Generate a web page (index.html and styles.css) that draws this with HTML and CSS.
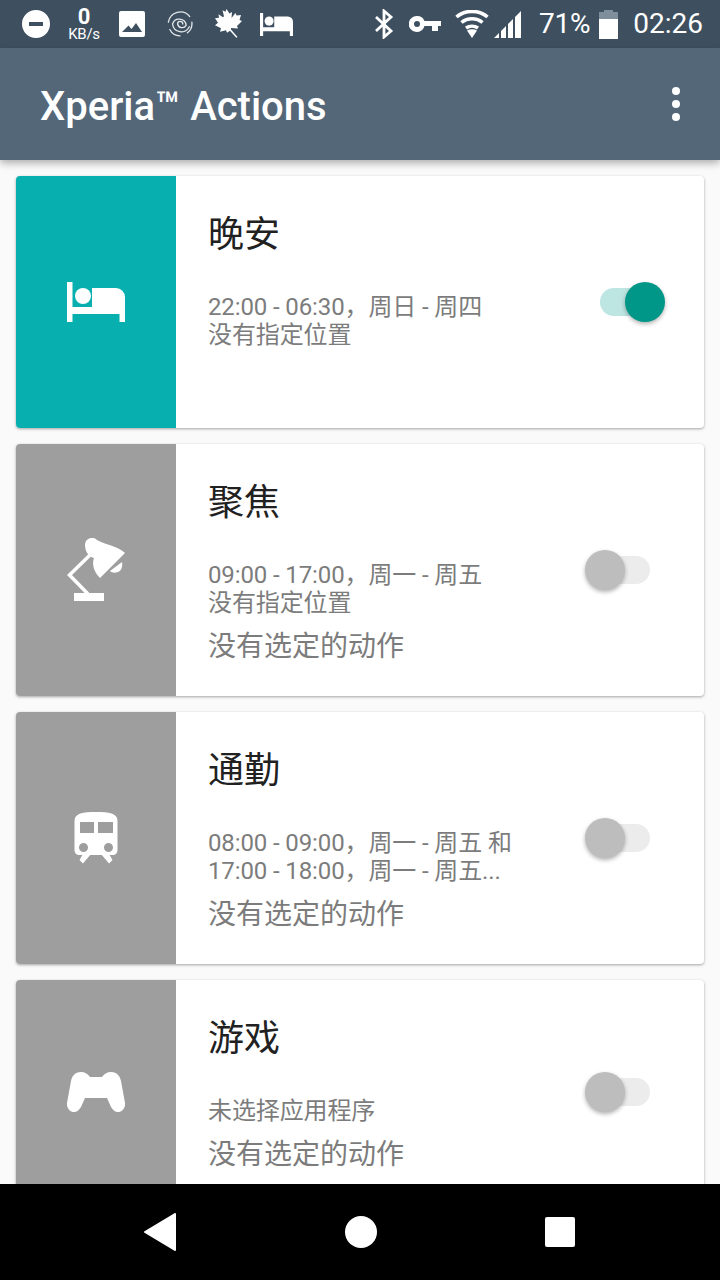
FILE: index.html
```html
<!DOCTYPE html>
<html lang="zh">
<head>
<meta charset="utf-8">
<title>Xperia Actions</title>
<link rel="stylesheet" href="styles.css">
</head>
<body>
<div class="screen">
  <header class="status">
    <div class="status-left">
      <svg class="si dnd" viewBox="0 0 28 28"><path fill="#fff" fill-rule="evenodd" d="M14 0a14 14 0 1 1 0 28a14 14 0 1 1 0-28zM7 12v4h14v-4z"/></svg>
      <div class="speed"><span class="speed-num">0</span><span class="speed-unit">KB/s</span></div>
      <svg class="si pic" viewBox="0 0 26 26"><path fill="#fff" fill-rule="evenodd" d="M2 0h22a2 2 0 0 1 2 2v22a2 2 0 0 1-2 2H2a2 2 0 0 1-2-2V2a2 2 0 0 1 2-2zM3 21h20l-6-9l-4.500 6l-3-3.500z"/></svg>
      <svg class="si swirl" viewBox="0 0 28 28" fill="none" stroke="#e4e8eb" stroke-width="1.400" stroke-linecap="round"><path d="M17 14A2.800 2.800 0 0 0 11.400 14A5 5 0 0 0 20.600 15.500A7.500 7.500 0 0 0 6 14A9.500 9.500 0 0 0 24 17"/><path d="M24.500 6A13 13 0 0 0 1.500 12"/><path d="M3 20A12.500 12.500 0 0 0 14 26.800"/><path d="M26.800 12A13 13 0 0 1 22 23.500"/></svg>
      <svg class="si leaf" viewBox="0 0 30 30"><path fill="#fff" d="M13.500 0l3 4.500l2.500-1.500l-.5 6l4-5l1 2.500l4.500-.5l-1.500 5l2.500 1l-5 5l1 2.500l-7-.5v1.500l6.500 7.500l-1.200.8l-6.300-7l-3 2l-1-2.500l-6 1.500l1-3.500l-6-3l3-2.500l-3-4.500l4-.5l-.5-3.500l4.500 3l1-1l-1.500-6l3 1.500z"/></svg>
      <svg class="si bed-s" viewBox="0 0 58 40"><path fill="#fff" d="M0 0h5.500v25H25V6h24a9 9 0 0 1 9 9v25h-5.500v-8H5.500v8H0z"/><circle fill="#fff" cx="16" cy="14" r="8"/></svg>
    </div>
    <div class="status-right">
      <svg class="si bt" viewBox="0 0 20 30" fill="none" stroke="#fff" stroke-width="2.800"><path d="M2 8l15 14l-7 6V2l7 6L2 22"/></svg>
      <svg class="si key" viewBox="0 0 32 18"><path fill="#fff" fill-rule="evenodd" d="M8 1a8 8 0 0 1 7.500 5H32v5h-3v5h-6v-5h-7.500A8 8 0 1 1 8 1zM8 6a3 3 0 1 0 0 6a3 3 0 0 0 0-6z"/></svg>
      <svg class="si wifi" viewBox="0 0 34 28" fill="none" stroke="#fff" stroke-width="3.500"><path d="M1.500 7c8.500-7.500 22.500-7.500 31 0"/><path d="M6.500 12.500c6-5 15-5 21 0"/><path d="M11 18c3.500-2.500 8.500-2.500 12 0"/><path fill="#fff" stroke="none" d="M12 20.500c3-1.800 7-1.800 10 0L17 28z"/></svg>
      <svg class="si signal" viewBox="0 0 28 28"><path fill="#fff" d="M0 28L5 23V28zM7 28V21L12 16V28zM14 28V14L19 9V28zM21 28V7L27 1V28z"/></svg>
      <span class="pct">71%</span>
      <div class="batt"><span class="batt-cap"></span><span class="batt-body"></span></div>
      <span class="time">02:26</span>
    </div>
  </header>

  <div class="appbar">
    <h1 class="app-title">Xperia™ Actions</h1>
    <div class="more"><i></i><i></i><i></i></div>
  </div>

  <main class="list">
    <article class="card">
      <div class="thumb thumb-on">
        <svg class="ico ico-bed" viewBox="0 0 58 40"><path fill="#fff" d="M0 0h5.500v25H25V6h24a9 9 0 0 1 9 9v25h-5.500v-8H5.500v8H0z"/><circle fill="#fff" cx="16" cy="14" r="8"/></svg>
      </div>
      <div class="body">
        <h2 class="name">晚安</h2>
        <p class="meta">22:00 - 06:30，周日 - 周四<br>没有指定位置</p>
      </div>
      <div class="switch switch-on"><span class="track"></span><span class="knob"></span></div>
    </article>

    <article class="card">
      <div class="thumb">
        <svg class="ico ico-lamp" viewBox="26 13 60 64"><path fill="none" stroke="#fff" stroke-width="3.500" d="M50 30L29.500 50L48 69"/><path fill="#fff" d="M34 68h30v8H34z"/><path fill="#fff" d="M45 20a7 7 0 0 1 12-5C66 20 78 21 85 28L60 53C53 46 52 38 54 33C50 32 45 28 45 20z"/><path fill="#fff" d="M70 46L82 37c1 5-1 9-4 10c-3 1-6 1-8-1z"/></svg>
      </div>
      <div class="body">
        <h2 class="name">聚焦</h2>
        <p class="meta">09:00 - 17:00，周一 - 周五<br>没有指定位置</p>
        <p class="action">没有选定的动作</p>
      </div>
      <div class="switch"><span class="track"></span><span class="knob"></span></div>
    </article>

    <article class="card">
      <div class="thumb">
        <svg class="ico ico-train" viewBox="0 0 44 52"><path fill="#fff" fill-rule="evenodd" d="M22 0c13 0 21.500 1 21.500 9v29c0 3-2 5-5 5H5.500c-3 0-5-2-5-5V9C.5 1 9 0 22 0zM6 10v11h14V10zM24 10v11h15V10zM9.500 31a4.500 4.500 0 1 0 0 9a4.500 4.500 0 0 0 0-9zM34.500 31a4.500 4.500 0 1 0 0 9a4.500 4.500 0 0 0 0-9z"/><path fill="#fff" d="M9 42L5.500 48L9 51.500L17 42zM35 42L38.500 48L35 51.500L27 42z"/></svg>
      </div>
      <div class="body">
        <h2 class="name">通勤</h2>
        <p class="meta">08:00 - 09:00，周一 - 周五 和<br>17:00 - 18:00，周一 - 周五...</p>
        <p class="action">没有选定的动作</p>
      </div>
      <div class="switch"><span class="track"></span><span class="knob"></span></div>
    </article>

    <article class="card card-short">
      <div class="thumb">
        <svg class="ico ico-bed" viewBox="0 0 58 40"><path fill="#fff" d="M14 0C18 0 21 2 23 5H35C37 2 40 0 44 0C50 0 53 4 54 9L58 31C58.500 36 55 40 51 40C48 40 46 38 44 35L40 26H18L14 35C12 38 10 40 7 40C3 40 -.5 36 0 31L4 9C5 4 8 0 14 0z"/></svg>
      </div>
      <div class="body">
        <h2 class="name">游戏</h2>
        <p class="meta">未选择应用程序</p>
        <p class="action">没有选定的动作</p>
      </div>
      <div class="switch"><span class="track"></span><span class="knob"></span></div>
    </article>
  </main>

  <nav class="navbar">
    <svg class="nav-ico" viewBox="0 0 32 38"><path fill="#fff" stroke="#fff" stroke-width="2" stroke-linejoin="round" d="M1 19L31 1v36z"/></svg>
    <span class="nav-home"></span>
    <span class="nav-recent"></span>
  </nav>
</div>
</body>
</html>
```

FILE: styles.css
```css
* { box-sizing: border-box; }
html, body { margin: 0; padding: 0; }
body { background: #fafafa; font-family: Roboto, "Noto Sans CJK SC", sans-serif; }
.screen { width: 720px; height: 1280px; display: flex; flex-direction: column; overflow: hidden; }

.status { height: 48px; flex: none; background: #3e5060; color: #fff; display: flex; align-items: center; justify-content: space-between; padding: 0 17px 0 22px; }
.status-left, .status-right { display: flex; align-items: center; }
.si { display: block; flex: none; }
.dnd { width: 28px; height: 28px; }
.speed { width: 30px; margin-left: 19px; display: flex; flex-direction: column; align-items: center; line-height: 1; }
.speed-num { font-size: 22px; font-weight: 700; height: 20px; line-height: 20px; }
.speed-unit { font-size: 15px; font-weight: 400; height: 14px; line-height: 14px; letter-spacing: -.3px; }
.pic { width: 26px; height: 26px; margin-left: 20px; }
.swirl { width: 26px; height: 26px; margin-left: 22px; }
.leaf { width: 30px; height: 30px; margin-left: 20px; }
.bed-s { width: 33px; height: 23px; margin-left: 17px; }
.bt { width: 20px; height: 30px; }
.key { width: 32px; height: 18px; margin-left: 15px; }
.wifi { width: 34px; height: 28px; margin-left: 14px; }
.signal { width: 28px; height: 28px; margin-left: 5px; }
.pct { font-size: 28px; margin-left: 17px; line-height: 50px; letter-spacing: -.2px; }
.batt { width: 19px; height: 29px; margin-left: 9px; display: flex; flex-direction: column; align-items: center; }
.batt-cap { width: 9px; height: 2px; background: #7f8e9b; }
.batt-body { width: 19px; height: 27px; background: linear-gradient(#7f8e9b 0 7px, #fff 7px); }
.time { font-size: 28px; margin-left: 15px; line-height: 50px; }

.appbar { height: 112px; flex: none; background: #546779; display: flex; align-items: center; justify-content: space-between; padding: 0 40px; box-shadow: 0 3px 8px rgba(0,0,0,.32); position: relative; z-index: 2; }
.app-title { margin: 6px 0 0; color: #fff; font-size: 40px; font-weight: 500; line-height: 48px; }
.more { display: flex; flex-direction: column; gap: 5px; }
.more i { display: block; width: 8px; height: 8px; border-radius: 50%; background: #fff; }

.list { flex: 1; min-height: 0; overflow: hidden; padding: 16px 16px 0; display: flex; flex-direction: column; gap: 16px; }
.card { flex: none; height: 252px; background: #fff; border-radius: 4px; box-shadow: 0 1px 3px rgba(0,0,0,.35); display: flex; overflow: hidden; }
.card-short { height: 224px; }
.thumb { width: 160px; flex: none; background: #9e9e9e; display: flex; align-items: center; justify-content: center; }
.thumb-on { background: #07b0ae; }
.ico { display: block; }
.ico-bed { width: 58px; height: 40px; }
.ico-lamp { width: 60px; height: 64px; }
.ico-train { width: 44px; height: 52px; }
.body { padding: 34px 0 0 32px; flex: 1; color: #7c7c7c; }
.name { margin: 0; font-size: 36px; font-weight: 400; line-height: 50px; color: #212121; }
.meta { margin: 33px 0 0; font-size: 24px; line-height: 28px; letter-spacing: -.12px; }
.action { margin: 10px 0 0; font-size: 28px; line-height: 40px; }

.switch { flex: none; align-self: center; position: relative; width: 65px; height: 40px; margin-right: 54px; }
.track { position: absolute; left: 16px; top: 6px; width: 49px; height: 28px; border-radius: 14px; background: #ececec; }
.knob { position: absolute; left: 0; top: 0; width: 40px; height: 40px; border-radius: 50%; background: #bdbdbd; box-shadow: 0 2px 4px rgba(0,0,0,.3); }
.switch-on { margin-right: 39px; }
.switch-on .track { left: 0; width: 50px; background: #bde5e1; }
.switch-on .knob { left: 25px; background: #009688; }

.navbar { height: 96px; flex: none; background: #000; display: flex; align-items: center; justify-content: space-between; padding: 0 145px 0 144px; position: relative; z-index: 3; }
.nav-ico { width: 32px; height: 38px; display: block; }
.nav-home { width: 32px; height: 32px; border-radius: 50%; background: #fff; }
.nav-recent { width: 30px; height: 30px; border-radius: 2px; background: #fff; }
```
